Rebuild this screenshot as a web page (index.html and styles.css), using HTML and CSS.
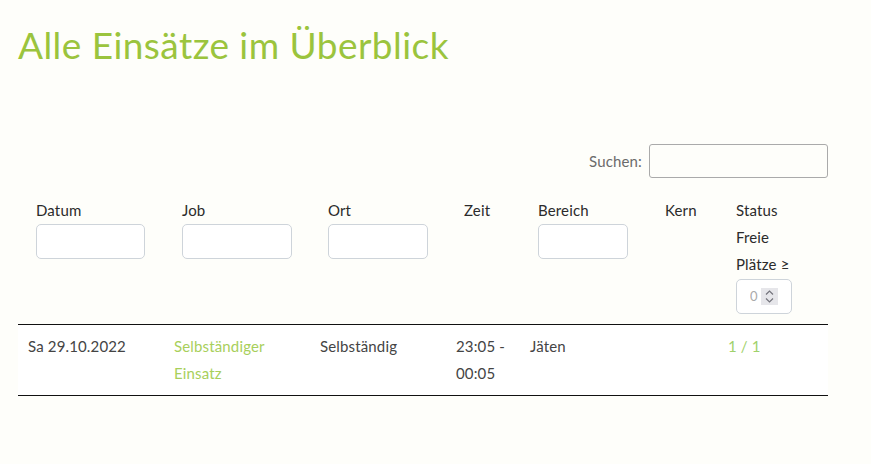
FILE: index.html
```html
<!DOCTYPE html>
<html lang="de">
<head>
<meta charset="utf-8">
<title>Alle Einsätze im Überblick</title>
<link rel="stylesheet" href="styles.css">
</head>
<body>
<main class="container">
  <h1 class="title">Alle Einsätze im Überblick</h1>
  <div class="filter">
    <label class="filter-label" for="search">Suchen:</label>
    <input class="search-input" id="search" type="search">
  </div>
  <table class="jobs">
    <colgroup>
      <col class="c-datum">
      <col class="c-job">
      <col class="c-ort">
      <col class="c-zeit">
      <col class="c-bereich">
      <col class="c-kern">
      <col class="c-status">
    </colgroup>
    <thead>
      <tr>
        <th>Datum<input class="col-filter w-109" type="text"></th>
        <th>Job<input class="col-filter w-110" type="text"></th>
        <th>Ort<input class="col-filter w-100" type="text"></th>
        <th>Zeit</th>
        <th>Bereich<input class="col-filter w-90" type="text"></th>
        <th>Kern</th>
        <th>Status<br>Freie<br>Plätze ≥
          <span class="num-wrap">
            <input class="num-filter" type="number" placeholder="0">
            <span class="spinner" aria-hidden="true">
              <svg width="17" height="17" viewBox="0 0 17 17">
                <path d="M5 6.5 L8.5 3 L12 6.5" fill="none" stroke="#74747c" stroke-width="1.2"/>
                <path d="M5 10.5 L8.5 14 L12 10.5" fill="none" stroke="#74747c" stroke-width="1.2"/>
              </svg>
            </span>
          </span>
        </th>
      </tr>
    </thead>
    <tbody>
      <tr>
        <td>Sa 29.10.2022</td>
        <td><a class="link" href="#">Selbständiger Einsatz</a></td>
        <td>Selbständig</td>
        <td>23:05 - 00:05</td>
        <td>Jäten</td>
        <td></td>
        <td class="status">1 / 1</td>
      </tr>
    </tbody>
  </table>
</main>
</body>
</html>
```
FILE: styles.css
```css
html, body {
  margin: 0;
  padding: 0;
}
body {
  background: #fefefa;
  font-family: "Lato", "Open Sans", sans-serif;
  font-size: 15px;
  letter-spacing: 0.15px;
  color: #444;
}
.container {
  width: 810px;
  margin-left: 18px;
  padding-top: 21px;
}
.title {
  margin: 0;
  font-size: 37px;
  letter-spacing: 0.45px;
  font-weight: 400;
  line-height: 48px;
  color: #9bc43d;
}
.filter {
  margin-top: 75px;
  display: flex;
  justify-content: flex-end;
  align-items: center;
  gap: 7px;
}
.filter-label {
  color: #6b6b6b;
}
.search-input {
  box-sizing: border-box;
  width: 179px;
  height: 34px;
  border: 1px solid #aaa;
  border-radius: 3px;
  background: transparent;
  margin: 0;
  padding: 4px;
  font: inherit;
}
.jobs {
  margin-top: 9px;
  width: 810px;
  border-collapse: collapse;
  table-layout: fixed;
  line-height: 27.2px;
}
.c-datum { width: 146px; }
.c-job { width: 146px; }
.c-ort { width: 136px; }
.c-zeit { width: 74px; }
.c-bereich { width: 127px; }
.c-kern { width: 71px; }
.c-status { width: 110px; }
.jobs th {
  text-align: left;
  vertical-align: top;
  font-weight: 400;
  color: #2b2b2b;
  padding: 10px 18px;
  border-bottom: 1px solid #111;
}
.col-filter {
  display: block;
  box-sizing: border-box;
  height: 35px;
  margin: 0;
  border: 1px solid #ced4da;
  border-radius: 5px;
  background: #fff;
  font: inherit;
}
.w-109 { width: 109px; }
.w-110 { width: 110px; }
.w-100 { width: 100px; }
.w-90 { width: 90px; }
.num-wrap {
  position: relative;
  display: block;
  width: 56px;
  height: 35px;
}
.num-filter {
  display: block;
  box-sizing: border-box;
  width: 56px;
  height: 35px;
  margin: 0;
  padding: 0 4px 0 13px;
  border: 1px solid #ced4da;
  border-radius: 5px;
  background: #fff;
  font-family: inherit;
  font-size: 13px;
  color: #aaa;
  -moz-appearance: textfield;
}
.num-filter::-webkit-inner-spin-button,
.num-filter::-webkit-outer-spin-button {
  -webkit-appearance: none;
  margin: 0;
}
.num-filter::placeholder {
  color: #aaa;
}
.spinner {
  position: absolute;
  left: 25px;
  top: 9px;
  width: 17px;
  height: 17px;
  background: #e6e6ea;
  display: flex;
}
.jobs td {
  vertical-align: top;
  padding: 8px 10px;
  background: #fff;
  border-bottom: 1px solid #111;
  color: #444;
}
.link {
  color: #a8cf5b;
  text-decoration: none;
}
.jobs td.status {
  color: #9fd16b;
}
```
